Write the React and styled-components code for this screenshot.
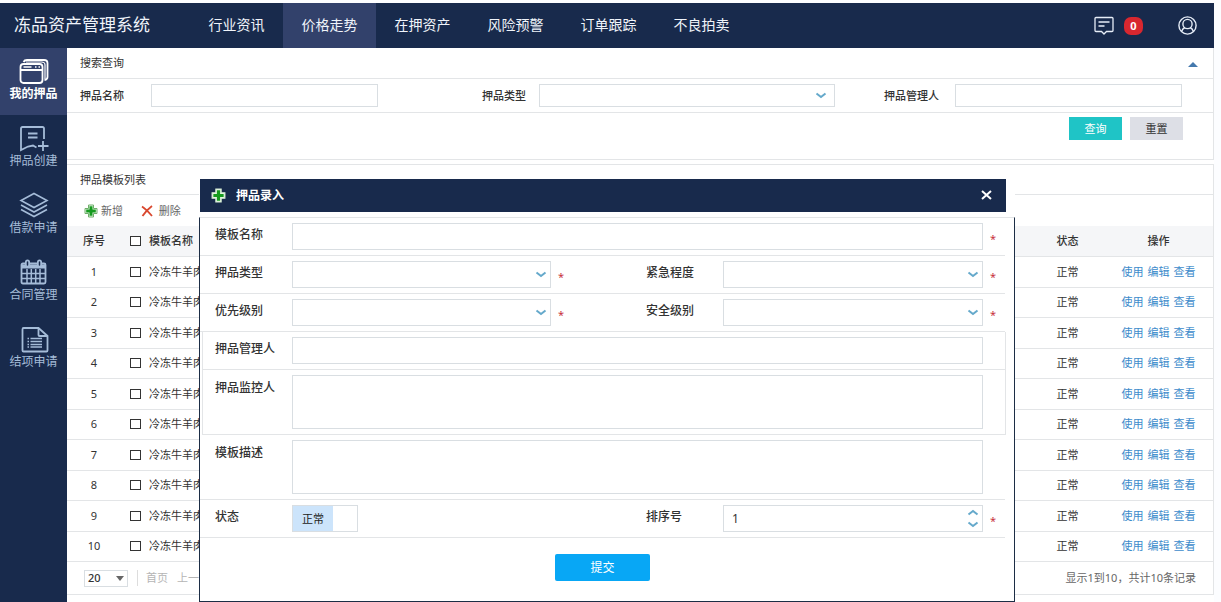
import React, { useState } from 'react'
import styled, { createGlobalStyle, css } from 'styled-components'

const GlobalStyle = createGlobalStyle`
  * {
    box-sizing: border-box;
  }
  body {
    margin: 0;
    background: #fff;
    color: #333;
    font-family: 'Noto Sans', 'Noto Sans CJK SC', sans-serif;
    font-size: 11px;
    line-height: 16px;
  }
  button, input, select, textarea {
    font: inherit;
    color: inherit;
    margin: 0;
  }
  button {
    border: none;
    padding: 0;
    background: none;
    cursor: pointer;
  }
`

const Page = styled.div`
  position: relative;
  min-height: 100vh;
  display: flex;
  flex-direction: column;
  padding: 3px 7px 0 0;
  background: #fcfdff;
`

const Header = styled.header`
  display: flex;
  align-items: stretch;
  height: 45px;
  padding-right: 17px;
  background: #182a4c;
  color: #f0f4fa;
`

const Title = styled.h1`
  width: 190px;
  margin: 0;
  padding-left: 14px;
  font-size: 17px;
  font-weight: 400;
  line-height: 43px;
`

const Nav = styled.nav`
  display: flex;
  flex: 1;
`

const NavLink = styled.a`
  width: 93px;
  text-align: center;
  font-size: 14px;
  line-height: 44px;
  color: #f0f4fa;
  text-decoration: none;
  background: ${p => (p.$active ? '#32416b' : 'transparent')};
`

const HeaderTools = styled.div`
  display: flex;
  align-items: center;
`

const IconButton = styled.button`
  display: flex;
  color: #e6edf7;
`

const Badge = styled.span`
  width: 19px;
  margin: 0 35px 0 10px;
  border-radius: 7px;
  background: #d8272f;
  color: #fff;
  font-weight: 700;
  line-height: 18px;
  text-align: center;
`

const Body = styled.div`
  display: flex;
  flex: 1;
`

const Sidebar = styled.aside`
  width: 67px;
  flex-shrink: 0;
  background: #182a4c;
`

const SideLink = styled.a`
  display: flex;
  flex-direction: column;
  align-items: center;
  height: 67px;
  padding-top: 10px;
  font-size: 12px;
  color: #a5bcd8;
  text-decoration: none;
  ${p => p.$active && css`
    background: #32416b;
    color: #fff;
    font-weight: 700;
  `}
`

const Main = styled.main`
  flex: 1;
  min-width: 0;
  background: #fff;
`

const Panel = styled.section`
  margin-bottom: 4px;
  border: 1px solid #e3e5e7;
  border-width: 0 1px 1px 0;
  border-top-width: ${p => (p.$lined ? '1px' : '0')};
  background: #fff;
`

const PanelHead = styled.header`
  display: flex;
  align-items: center;
  justify-content: space-between;
  height: ${p => (p.$short ? 30 : 31)}px;
  padding: 0 15px 0 13px;
  border-bottom: 1px solid #e3e5e7;
  h2 {
    margin: 0;
    font-size: 11px;
    font-weight: 400;
  }
`

const SearchRow = styled.div`
  display: grid;
  grid-template-columns: 402fr 402fr 298fr;
  height: 34px;
  padding: 0 31px 0 13px;
  border-bottom: 1px solid #e3e5e7;
`

const SearchField = styled.div`
  display: flex;
  align-items: center;
  padding-right: ${p => p.$gap || 0}px;
  label {
    width: ${p => p.$label || 71}px;
    flex-shrink: 0;
    font-weight: 500;
  }
`

const control = css`
  display: block;
  width: 100%;
  min-width: 0;
  border: 1px solid #d9dee2;
  border-radius: 0;
  background: #fff;
  outline: none;
`

const Input = styled.input`
  ${control}
  height: ${p => (p.$tall ? 27 : 23)}px;
  padding: 0 8px;
`

const TextArea = styled.textarea`
  ${control}
  height: 54px;
  resize: none;
`

const SelectBox = styled.div`
  position: relative;
  flex: 1;
  min-width: 0;
  svg {
    position: absolute;
    right: ${p => (p.$tall ? 4 : 8)}px;
    top: 50%;
    margin-top: -4px;
    pointer-events: none;
  }
`

const Select = styled.select`
  ${control}
  appearance: none;
  height: ${p => (p.$tall ? 27 : 23)}px;
`

const SearchActions = styled.div`
  display: flex;
  justify-content: flex-end;
  gap: 8px;
  height: 46px;
  padding: 4px 30px 0 0;
`

const ActionButton = styled.button`
  width: 53px;
  height: 23px;
  background: ${p => (p.$primary ? '#1fc4c6' : '#dddfe6')};
  color: ${p => (p.$primary ? '#fff' : '#333')};
`

const Toolbar = styled.div`
  display: flex;
  align-items: center;
  gap: 18px;
  height: 31px;
  padding-left: 17px;
`

const ToolButton = styled.button`
  display: flex;
  align-items: center;
  gap: 3px;
  color: #666;
`

const Table = styled.table`
  width: 100%;
  height: 336px;
  border-collapse: separate;
  border-spacing: 0;
  table-layout: fixed;
  th, td {
    height: 30px;
    padding: 0;
    border-bottom: 1px solid #e3e5e7;
    text-align: center;
    white-space: nowrap;
  }
  th {
    height: 31px;
    background: #f5f6f8;
    font-weight: 500;
  }
`

const NameCell = styled.div`
  display: flex;
  align-items: center;
  gap: 8px;
  padding-left: 9px;
  label {
    cursor: pointer;
  }
`

const Checkbox = styled.input.attrs({ type: 'checkbox' })`
  appearance: none;
  width: 11px;
  height: 10px;
  border: 1px solid #333;
  background: #fff;
  &:checked {
    background: #333;
  }
`

const RowLinks = styled.div`
  display: flex;
  justify-content: center;
  gap: 4px;
  a {
    color: #3d8bcb;
    text-decoration: none;
  }
`

const Pager = styled.footer`
  display: flex;
  align-items: center;
  height: 32px;
  padding: 0 17px;
`

const PageSize = styled.div`
  position: relative;
  width: 44px;
  select {
    ${control}
    appearance: none;
    height: 17px;
    padding: 0 3px;
    line-height: 14px;
    font-weight: 500;
  }
  svg {
    position: absolute;
    right: 4px;
    top: 6px;
    pointer-events: none;
  }
`

const PagerLinks = styled.div`
  display: flex;
  gap: 9px;
  margin-left: 9px;
  padding-left: 8px;
  border-left: 1px solid #ddd;
  button:disabled {
    color: #b5b5b5;
  }
`

const PagerInfo = styled.span`
  margin-left: auto;
  color: #666;
`

const Dialog = styled.div`
  position: absolute;
  top: 179px;
  left: 199px;
  right: 206px;
  background: #fff;
  font-size: 12px;
`

const DialogHead = styled.header`
  display: flex;
  align-items: center;
  gap: 10px;
  height: 33px;
  margin: 0 9px 5px 1px;
  padding: 0 14px 0 11px;
  background: #182a4c;
  color: #fff;
  h2 {
    flex: 1;
    margin: 0;
    font-size: 12px;
    font-weight: 700;
  }
`

const DialogForm = styled.form`
  height: 385px;
  border: 1px solid #1c2d45;
  border-top-color: #e3e5e7;
`

const FormRow = styled.div`
  display: grid;
  grid-template-columns: 77px 259fr 95px 77px 260fr 22px;
  align-items: ${p => (p.$area ? 'start' : 'center')};
  height: ${p => (p.$area ? 65 : 38)}px;
  margin-right: 9px;
  padding: ${p => (p.$area ? '5px 0 0 15px' : '0 0 0 15px')};
  border-bottom: 1px solid #e3e5e7;
  label, .legend {
    padding: ${p => (p.$area ? '5px 0 0' : '0 0 3px')};
    font-weight: 500;
  }
`

const FormGroup = styled.div`
  margin: 0 8px 0 2px;
  border: 1px solid #e3e5e7;
  border-width: 0 1px;
  ${FormRow} {
    margin-right: 0;
    padding-left: 12px;
  }
`

const Wide = styled.div`
  grid-column: 2 / 6;
`

const Required = styled.span`
  padding: 4px 0 0 7px;
  color: #c8333d;
  font-size: 11px;
  line-height: 12px;
`

const Toggle = styled.button`
  display: flex;
  width: 66px;
  height: 27px;
  border: 1px solid #d9dee2;
  font-size: 11px;
  span {
    width: 40px;
    line-height: 25px;
    background: #cce4fb;
    color: #222;
  }
`

const Spinner = styled.div`
  display: flex;
  position: relative;
`

const SpinnerArrows = styled.div`
  position: absolute;
  top: 4px;
  right: 4px;
  display: flex;
  flex-direction: column;
  gap: 5px;
  button {
    display: flex;
  }
`

const SubmitRow = styled.div`
  display: flex;
  justify-content: center;
  padding: 16px 9px 0 0;
`

const Submit = styled.button`
  width: 95px;
  height: 27px;
  border-radius: 2px;
  background: #08a7f5;
  color: #fff;
`

const Chevron = ({ up }) => (
  <svg width="12" height="7" viewBox="0 0 12 7" fill="none" stroke="#65a9cb" strokeWidth="2">
    <path d={up ? 'M1.5 5.5 6 2l4.5 3.5' : 'M1.5 1.5 6 5l4.5-3.5'} />
  </svg>
)

const PlusIcon = ({ size = 14 }) => (
  <svg width={size} height={size} viewBox="0 0 14 14">
    <path d="M4.500 1h5v3.500H13v5H9.500V13h-5V9.500H1v-5h3.500z" fill="#e9f7e6" stroke={size > 14 ? '#d5ecd2' : '#6fae6a'} strokeWidth="1" />
    <path d="M5.500 2.200h3v3.300h3.300v3H8.500v3.300h-3V8.500H2.200v-3h3.300z" fill="#159a1e" />
  </svg>
)

const DeleteIcon = () => (
  <svg width="12" height="12" viewBox="0 0 12 12" fill="none" stroke="#d9482f" strokeWidth="1.800">
    <path d="M1 1.500c3 2 7 6 10 9.500M11 1C7 4 4 7 1.500 11" />
  </svg>
)

const sideIcon = { width: 32, height: 28, viewBox: '0 0 32 28', fill: 'none', stroke: 'currentColor', strokeWidth: 1.8 }

const WindowsIcon = () => (
  <svg {...sideIcon}>
    <rect x="2.500" y="6" width="22" height="19" rx="3" />
    <path d="M2.500 12h22M5.500 4q1-2 3.500-2h17q3.500 0 3.500 3v14q0 2.500-3 3" />
    <path d="M8 4h15.500q3.500 0 3.500 3v14" strokeWidth="1.200" />
    <path d="M5.500 9h8M17 9h1.500M20.500 9H22" strokeWidth="1.500" />
  </svg>
)

const NoteIcon = () => (
  <svg {...sideIcon}>
    <path d="M26 14V3.500Q26 2 24.500 2h-20Q3 2 3 3.500V25l7-3.500 5-1 3.500 2" />
    <path d="M10 8.500h9.500M10 12.500h9.500M25 16v10M20 21h10.500" />
  </svg>
)

const LayersIcon = () => (
  <svg {...sideIcon} strokeWidth="1.600">
    <path d="m16 1.500 13 7-13 7-13-7zM3 13l13 7 13-7M3 17.500l13 7 13-7" />
  </svg>
)

const CalendarIcon = () => (
  <svg {...sideIcon}>
    <path d="M5 4.500h21q1.500 0 1.500 1.500v17q0 1.500-1.500 1.500H5q-1.500 0-1.500-1.500V6q0-1.500 1.500-1.500z" />
    <path d="M4 7.500h23" strokeWidth="4" />
    <path d="M9 10v14M13.300 10v14M17.700 10v14M22 10v14M4 14.500h23M4 19.500h23" strokeWidth="1.500" />
    <path d="M9.500 3v3M21.500 3v3" strokeWidth="5" strokeLinecap="round" />
    <path d="M9.500 3v3M21.500 3v3" stroke="#182a4c" strokeWidth="1.500" strokeLinecap="round" />
  </svg>
)

const DocumentIcon = () => (
  <svg {...sideIcon}>
    <path d="M20.500 2h-15Q4.500 2 4.500 3.500v21q0 1 1 1h23q1 0 1-1V10z" />
    <path d="M20.500 2v7q0 1 1 1h8" />
    <path d="M9.500 12.500h1.500M9.500 15.500h1.500M9.500 18.500h1.500M9.500 21h1.500M12.500 12.500H24M12.500 15.500H24M12.500 18.500H24M12.500 21H24" strokeWidth="1.400" />
  </svg>
)

const MessageIcon = () => (
  <svg width="20" height="19" viewBox="0 0 20 19" fill="none" stroke="currentColor" strokeWidth="1.300">
    <path d="M2 1.500h16q1 0 1 1v12q0 1-1 1h-5.500L10 18l-2.500-2.500H2q-1 0-1-1v-12q0-1 1-1z" />
    <path d="M4.500 6h11M4.500 10h6" />
  </svg>
)

const UserIcon = () => (
  <svg width="19" height="19" viewBox="0 0 19 19" fill="none" stroke="currentColor" strokeWidth="1.400">
    <circle cx="9.500" cy="9.500" r="8.600" />
    <circle cx="9.500" cy="8" r="4.600" />
    <path d="M3.500 15.500c1-2.500 2-3.500 3.500-4M15.500 15.500c-1-2.500-2-3.500-3.500-4" />
  </svg>
)

const navItems = ['行业资讯', '价格走势', '在押资产', '风险预警', '订单跟踪', '不良拍卖']

const sideItems = [
  { label: '我的押品', Icon: WindowsIcon },
  { label: '押品创建', Icon: NoteIcon },
  { label: '借款申请', Icon: LayersIcon },
  { label: '合同管理', Icon: CalendarIcon },
  { label: '结项申请', Icon: DocumentIcon },
]

const rows = Array.from({ length: 10 }, (_, i) => ({ id: i + 1, name: '冷冻牛羊肉', status: '正常' }))

const FormSelect = ({ id, tall }) => (
  <SelectBox $tall={tall}>
    <Select id={id} $tall={tall} />
    <Chevron />
  </SelectBox>
)

const EntryDialog = () => {
  const [order, setOrder] = useState(1)
  const [enabled, setEnabled] = useState(true)

  return (
    <Dialog role="dialog" aria-labelledby="dialog-title">
      <DialogHead>
        <PlusIcon size={15} />
        <h2 id="dialog-title">押品录入</h2>
        <button type="button" aria-label="关闭">
          <svg width="11" height="10" viewBox="0 0 11 10" stroke="#fff" strokeWidth="2">
            <path d="m1 1 9 8M10 1 1 9" />
          </svg>
        </button>
      </DialogHead>
      <DialogForm onSubmit={e => e.preventDefault()}>
        <FormRow>
          <label htmlFor="tpl-name">模板名称</label>
          <Wide><Input id="tpl-name" $tall /></Wide>
          <Required>*</Required>
        </FormRow>
        <FormRow>
          <label htmlFor="type">押品类型</label>
          <FormSelect id="type" tall />
          <Required>*</Required>
          <label htmlFor="urgency">紧急程度</label>
          <FormSelect id="urgency" tall />
          <Required>*</Required>
        </FormRow>
        <FormRow>
          <label htmlFor="priority">优先级别</label>
          <FormSelect id="priority" tall />
          <Required>*</Required>
          <label htmlFor="safety">安全级别</label>
          <FormSelect id="safety" tall />
          <Required>*</Required>
        </FormRow>
        <FormGroup>
          <FormRow>
            <label htmlFor="manager">押品管理人</label>
            <Wide><Input id="manager" $tall /></Wide>
          </FormRow>
          <FormRow $area>
            <label htmlFor="monitor">押品监控人</label>
            <Wide><TextArea id="monitor" /></Wide>
          </FormRow>
        </FormGroup>
        <FormRow $area>
          <label htmlFor="desc">模板描述</label>
          <Wide><TextArea id="desc" /></Wide>
        </FormRow>
        <FormRow>
          <span className="legend" id="status-label">状态</span>
          <Toggle
            type="button"
            role="switch"
            aria-checked={enabled}
            aria-labelledby="status-label"
            onClick={() => setEnabled(!enabled)}
          >
            <span>正常</span>
          </Toggle>
          <span />
          <label htmlFor="order">排序号</label>
          <Spinner>
            <Input id="order" $tall value={order} onChange={e => setOrder(Number(e.target.value) || 0)} />
            <SpinnerArrows>
              <button type="button" aria-label="增加" onClick={() => setOrder(order + 1)}><Chevron up /></button>
              <button type="button" aria-label="减少" onClick={() => setOrder(order - 1)}><Chevron /></button>
            </SpinnerArrows>
          </Spinner>
          <Required>*</Required>
        </FormRow>
        <SubmitRow>
          <Submit type="submit">提交</Submit>
        </SubmitRow>
      </DialogForm>
    </Dialog>
  )
}

const App = () => (
  <>
    <GlobalStyle />
    <Page>
      <Header>
        <Title>冻品资产管理系统</Title>
        <Nav>
          {navItems.map((item, i) => <NavLink key={item} href="#" $active={i === 1}>{item}</NavLink>)}
        </Nav>
        <HeaderTools>
          <IconButton aria-label="消息"><MessageIcon /></IconButton>
          <Badge>0</Badge>
          <IconButton aria-label="用户"><UserIcon /></IconButton>
        </HeaderTools>
      </Header>
      <Body>
        <Sidebar>
          {sideItems.map(({ label, Icon }, i) => (
            <SideLink key={label} href="#" $active={i === 0}>
              <Icon />
              {label}
            </SideLink>
          ))}
        </Sidebar>
        <Main>
          <Panel>
            <PanelHead>
              <h2>搜索查询</h2>
              <button aria-label="收起">
                <svg width="10" height="5" viewBox="0 0 10 5"><path d="M0 5 5 0l5 5z" fill="#4479ad" /></svg>
              </button>
            </PanelHead>
            <SearchRow>
              <SearchField $gap={104}>
                <label htmlFor="q-name">押品名称</label>
                <Input id="q-name" />
              </SearchField>
              <SearchField $label={57} $gap={49}>
                <label htmlFor="q-type">押品类型</label>
                <FormSelect id="q-type" />
              </SearchField>
              <SearchField>
                <label htmlFor="q-manager">押品管理人</label>
                <Input id="q-manager" />
              </SearchField>
            </SearchRow>
            <SearchActions>
              <ActionButton $primary>查询</ActionButton>
              <ActionButton>重置</ActionButton>
            </SearchActions>
          </Panel>
          <Panel $lined>
            <PanelHead $short>
              <h2>押品模板列表</h2>
            </PanelHead>
            <Toolbar>
              <ToolButton><PlusIcon />新增</ToolButton>
              <ToolButton><DeleteIcon />&nbsp;删除</ToolButton>
            </Toolbar>
            <Table>
              <colgroup>
                <col width="54" />
                <col />
                <col width="73" />
                <col width="109" />
              </colgroup>
              <thead>
                <tr>
                  <th>序号</th>
                  <th>
                    <NameCell>
                      <Checkbox id="all" />
                      <label htmlFor="all">模板名称</label>
                    </NameCell>
                  </th>
                  <th>状态</th>
                  <th>操作</th>
                </tr>
              </thead>
              <tbody>
                {rows.map(row => (
                  <tr key={row.id}>
                    <td>{row.id}</td>
                    <td>
                      <NameCell>
                        <Checkbox id={`row-${row.id}`} />
                        <label htmlFor={`row-${row.id}`}>{row.name}</label>
                      </NameCell>
                    </td>
                    <td>{row.status}</td>
                    <td>
                      <RowLinks>
                        <a href="#">使用</a>
                        <a href="#">编辑</a>
                        <a href="#">查看</a>
                      </RowLinks>
                    </td>
                  </tr>
                ))}
              </tbody>
            </Table>
            <Pager>
              <PageSize>
                <select aria-label="每页条数" defaultValue="20">
                  <option>20</option>
                </select>
                <svg width="8" height="5" viewBox="0 0 8 5"><path d="M0 0h8L4 5z" fill="#666" /></svg>
              </PageSize>
              <PagerLinks>
                <button disabled>首页</button>
                <button disabled>上一页</button>
              </PagerLinks>
              <PagerInfo>显示1到10，共计10条记录</PagerInfo>
            </Pager>
          </Panel>
        </Main>
      </Body>
      <EntryDialog />
    </Page>
  </>
)

export default App
